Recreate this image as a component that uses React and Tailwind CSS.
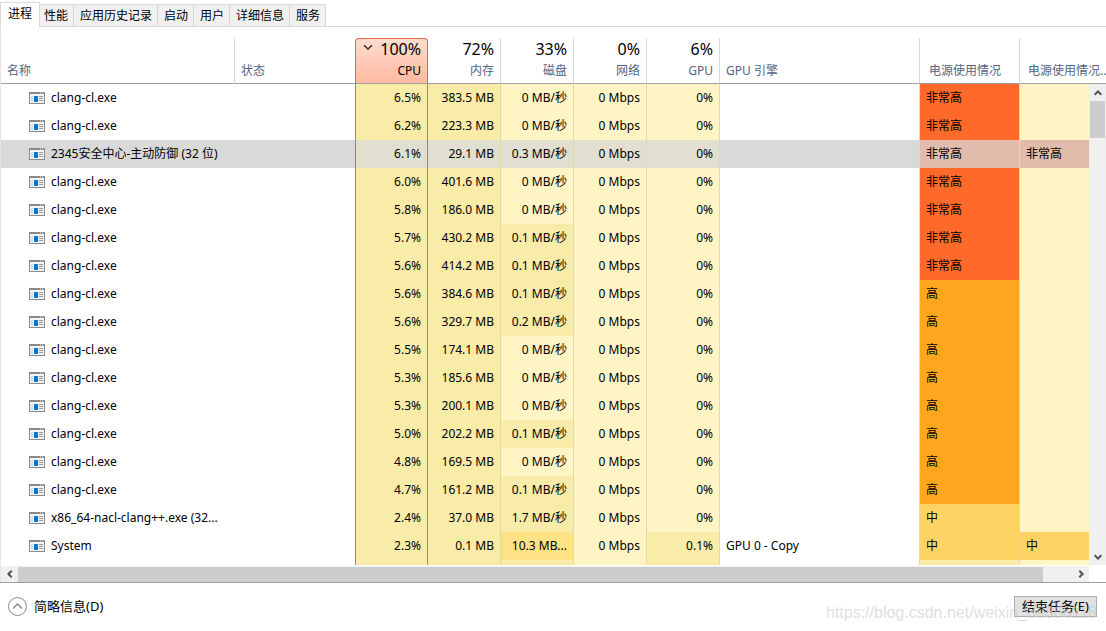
import React from 'react';

const TABS = ['进程', '性能', '应用历史记录', '启动', '用户', '详细信息', '服务'];

const HEAT = {
  none: '',
  low: 'bg-[#fff4c4]',
  mild: 'bg-[#f9eca8]',
  warm: 'bg-[#ffe285]',
  mid: 'bg-[#ffd264]',
  high: 'bg-[#fea71e]',
  max: 'bg-[#ff6929]',
};

const HEAT_SELECTED = {
  none: '',
  low: 'bg-[#e1dfd0]',
  mild: 'bg-[#e1dfd0]',
  max: 'bg-[#e1bcad]',
};

const POWER_HEAT = { 非常高: 'max', 高: 'high', 中: 'mid' };

const PROCESSES = [
  ['clang-cl.exe', '6.5%', '383.5 MB', '0 MB/秒', '0%', '', '非常高', ''],
  ['clang-cl.exe', '6.2%', '223.3 MB', '0 MB/秒', '0%', '', '非常高', ''],
  ['2345安全中心-主动防御 (32 位)', '6.1%', '29.1 MB', '0.3 MB/秒', '0%', '', '非常高', '非常高'],
  ['clang-cl.exe', '6.0%', '401.6 MB', '0 MB/秒', '0%', '', '非常高', ''],
  ['clang-cl.exe', '5.8%', '186.0 MB', '0 MB/秒', '0%', '', '非常高', ''],
  ['clang-cl.exe', '5.7%', '430.2 MB', '0.1 MB/秒', '0%', '', '非常高', ''],
  ['clang-cl.exe', '5.6%', '414.2 MB', '0.1 MB/秒', '0%', '', '非常高', ''],
  ['clang-cl.exe', '5.6%', '384.6 MB', '0.1 MB/秒', '0%', '', '高', ''],
  ['clang-cl.exe', '5.6%', '329.7 MB', '0.2 MB/秒', '0%', '', '高', ''],
  ['clang-cl.exe', '5.5%', '174.1 MB', '0 MB/秒', '0%', '', '高', ''],
  ['clang-cl.exe', '5.3%', '185.6 MB', '0 MB/秒', '0%', '', '高', ''],
  ['clang-cl.exe', '5.3%', '200.1 MB', '0 MB/秒', '0%', '', '高', ''],
  ['clang-cl.exe', '5.0%', '202.2 MB', '0.1 MB/秒', '0%', '', '高', ''],
  ['clang-cl.exe', '4.8%', '169.5 MB', '0 MB/秒', '0%', '', '高', ''],
  ['clang-cl.exe', '4.7%', '161.2 MB', '0.1 MB/秒', '0%', '', '高', ''],
  ['x86_64-nacl-clang++.exe (32...', '2.4%', '37.0 MB', '1.7 MB/秒', '0%', '', '中', ''],
  ['System', '2.3%', '0.1 MB', '10.3 MB...', '0.1%', 'GPU 0 - Copy', '中', '中'],
];

function Chevron({ className }) {
  return (
    <svg viewBox="0 0 8 8" className={className} fill="none" stroke="currentColor" strokeWidth="2">
      <path d="M0.7 5.7 4 2.4 7.3 5.7" />
    </svg>
  );
}

function ProcessIcon() {
  return (
    <svg width="16" height="12" viewBox="0 0 16 12" className="shrink-0" aria-hidden="true">
      <rect x="0.5" y="0.5" width="15" height="11" fill="#f4f4f4" stroke="#8a8a8a" />
      <rect width="16" height="2" fill="#8a8a8a" />
      <path d="M11 1h1M13 1h1" stroke="#e8e8e8" />
      <rect x="2" y="4" width="2" height="6" fill="#dcdcdc" />
      <rect x="5" y="4" width="4" height="6" fill="#0078d7" />
      <path d="M10 4.5h4M10 6.5h4M10 8.5h4" stroke="#9a9a9a" />
    </svg>
  );
}

function UsageHead({ percent, label }) {
  return (
    <th scope="col" className="border-r border-[#d9d9d9] p-0 pr-[6px] text-right align-top font-normal">
      <div className="h-[22px] text-base leading-[22px] text-black">{percent}</div>
      <div className="h-5 leading-[22px]">{label}</div>
    </th>
  );
}

function TextHead({ label, className = '' }) {
  return (
    <th scope="col" className={`p-0 text-left align-bottom font-normal ${className}`}>
      <div className="mb-[2px] h-5 overflow-hidden leading-5 whitespace-nowrap">{label}</div>
    </th>
  );
}

function Cell({ heat, selected, className = '', children }) {
  const fill = selected ? HEAT_SELECTED[heat] : HEAT[heat];
  return <td className={`overflow-hidden p-0 whitespace-nowrap ${fill} ${className}`}>{children}</td>;
}

function ProcessRow({ process }) {
  const [name, cpu, memory, disk, gpu, engine, power, trend] = process;
  const selected = name.startsWith('2345');
  const diskHeat = disk.startsWith('10') ? 'warm' : disk.startsWith('0 ') ? 'low' : 'mild';
  return (
    <tr className={`h-7 ${selected ? 'bg-[#d9d9d9]' : ''}`}>
      <td className="p-0 pl-7">
        <div className="flex items-center gap-[6px] whitespace-nowrap">
          <ProcessIcon />
          {name}
        </div>
      </td>
      <td />
      <Cell heat="mild" selected={selected} className="border-x border-[#e8673c] pr-[6px] text-right">{cpu}</Cell>
      <Cell heat="mild" selected={selected} className="border-r border-[#e3d7a0] pr-[6px] text-right">{memory}</Cell>
      <Cell heat={diskHeat} selected={selected} className="border-r border-[#e3d9b0] pr-[6px] text-right">{disk}</Cell>
      <Cell heat="low" selected={selected} className="border-r border-[#e3d9b0] pr-[6px] text-right">0 Mbps</Cell>
      <Cell heat={gpu === '0%' ? 'low' : 'mild'} selected={selected} className="border-r border-[#e3d9b0] pr-[6px] text-right">{gpu}</Cell>
      <Cell heat="none" selected={selected} className="border-r border-[#e3d9b0] pl-[6px]">{engine}</Cell>
      <Cell heat={POWER_HEAT[power]} selected={selected} className="border-r border-[#e3d9b0] pl-[6px]">{power}</Cell>
      <Cell heat={POWER_HEAT[trend] || 'low'} selected={selected} className="pl-[6px]">{trend}</Cell>
    </tr>
  );
}

function ProcessTable() {
  return (
    <div className="relative overflow-hidden">
      <table className="w-full table-fixed border-separate border-spacing-0 text-xs">
        <colgroup>
          <col className="w-[234px]" />
          <col className="w-[120px]" />
          <col className="w-[73px]" />
          <col className="w-[73px]" />
          <col className="w-[73px]" />
          <col className="w-[73px]" />
          <col className="w-[73px]" />
          <col />
          <col className="w-[100px]" />
          <col className="w-[86px]" />
        </colgroup>
        <thead className="text-[#55657d] [&_th]:border-b [&_th]:border-b-[#a0a0a0]">
          <tr className="h-[46px]">
            <TextHead label="名称" className="border-r border-[#d9d9d9] pl-[6px]" />
            <TextHead label="状态" className="pl-[6px]" />
            <th scope="col" aria-sort="descending" className="rounded-t-sm border border-[#e8673c] bg-linear-to-b from-[#ffdccf] to-[#ffb9a2] p-0 pr-[6px] text-right align-top font-normal text-black">
              <div className="flex h-[21px] items-center justify-between pl-[7px] text-base leading-[21px]">
                <svg width="10" height="10" viewBox="0 0 10 10" className="mb-[5px]" fill="none" stroke="#222" strokeWidth="1.3" aria-hidden="true">
                  <path d="M1 3.2 5 7 9 3.2" />
                </svg>
                100%
              </div>
              <div className="h-5 leading-[22px]">CPU</div>
            </th>
            <UsageHead percent="72%" label="内存" />
            <UsageHead percent="33%" label="磁盘" />
            <UsageHead percent="0%" label="网络" />
            <UsageHead percent="6%" label="GPU" />
            <TextHead label="GPU 引擎" className="border-r border-[#d9d9d9] pl-[6px]" />
            <TextHead label="电源使用情况" className="border-r border-[#d9d9d9] pl-[9px]" />
            <TextHead label="电源使用情况..." className="pl-[8px]" />
          </tr>
        </thead>
        <tbody>
          {PROCESSES.map((process, i) => (
            <ProcessRow key={i} process={process} />
          ))}
          <tr className="h-[5px]">
            <td />
            <td />
            <td className="border-x border-[#e8673c] bg-[#f9eca8] p-0" />
            <td className="border-r border-[#e3d7a0] bg-[#f9eca8] p-0" />
            <td className="border-r border-[#e3d9b0] bg-[#f9eca8] p-0" />
            <td className="border-r border-[#e3d9b0] bg-[#fff4c4] p-0" />
            <td className="border-r border-[#e3d9b0] bg-[#f9eca8] p-0" />
            <td className="border-r border-[#e3d9b0] p-0" />
            <td className="border-r border-[#e3d9b0] bg-[#f9eca8] p-0" />
            <td className="bg-[#fff4c4] p-0" />
          </tr>
        </tbody>
      </table>
      <div className="absolute top-[46px] right-0 bottom-0 flex w-[17px] flex-col items-center bg-[#f0f0f0] text-[#505050]">
        <button type="button" aria-label="向上滚动" className="flex h-[17px] w-full items-center justify-center">
          <Chevron className="size-2" />
        </button>
        <div className="h-[37px] w-[15px] bg-[#cdcdcd]" />
        <button type="button" aria-label="向下滚动" className="mt-auto flex h-[17px] w-full items-center justify-center">
          <Chevron className="size-2 rotate-180" />
        </button>
      </div>
    </div>
  );
}

export default function App() {
  return (
    <div className="bg-white font-['Noto_Sans','Noto_Sans_CJK_SC',sans-serif] text-xs text-black">
      <div role="tablist" className="flex h-[27px] items-end border-b border-[#d9d9d9]">
        {TABS.map((tab, i) => (
          <button
            key={tab}
            type="button"
            role="tab"
            aria-selected={i === 0}
            className={
              i === 0
                ? 'z-10 -mr-0.5 -mb-px h-[25px] border border-b-0 border-[#d9d9d9] bg-white px-[7px] pb-[3px]'
                : 'h-[22px] border border-b-0 border-l-0 border-[#d9d9d9] bg-[#f0f0f0] pr-[5px] pl-1.5'
            }
          >
            {tab}
          </button>
        ))}
      </div>

      <div className="border-l border-[#e5e5e5] pt-[11px]">
        <ProcessTable />
        <div className="mt-px mr-[17px] flex h-4 items-center bg-[#f0f0f0] text-[#505050]">
          <button type="button" aria-label="向左滚动" className="flex h-full w-[17px] items-center justify-center">
            <Chevron className="size-2 -rotate-90" />
          </button>
          <div className="h-[15px] flex-1 bg-[#cdcdcd]" />
          <button type="button" aria-label="向右滚动" className="ml-[29px] flex h-full w-[17px] items-center justify-center">
            <Chevron className="size-2 rotate-90" />
          </button>
        </div>
      </div>

      <footer className="relative flex h-[49px] items-center justify-between border-t border-[#a0a0a0] pr-[9px] pb-px pl-2 text-[13px]">
        <button type="button" className="flex items-center gap-[7px]">
          <svg width="19" height="19" viewBox="0 0 19 19" fill="none" stroke="#8a8a8a" aria-hidden="true">
            <circle cx="9.5" cy="9.5" r="9" />
            <path d="M5 11.5 9.5 7 14 11.5" strokeWidth="1.5" />
          </svg>
          简略信息(D)
        </button>
        <button type="button" className="h-[21px] border border-[#adadad] bg-[#e1e1e1] px-[7px] leading-[19px]">
          结束任务(E)
        </button>
        <span className="pointer-events-none absolute right-[9px] bottom-[6px] font-['Liberation_Sans',sans-serif] text-base text-[#c8c8c8]/60">
          https://blog.csdn.net/weixin_39866118
        </span>
      </footer>
    </div>
  );
}
